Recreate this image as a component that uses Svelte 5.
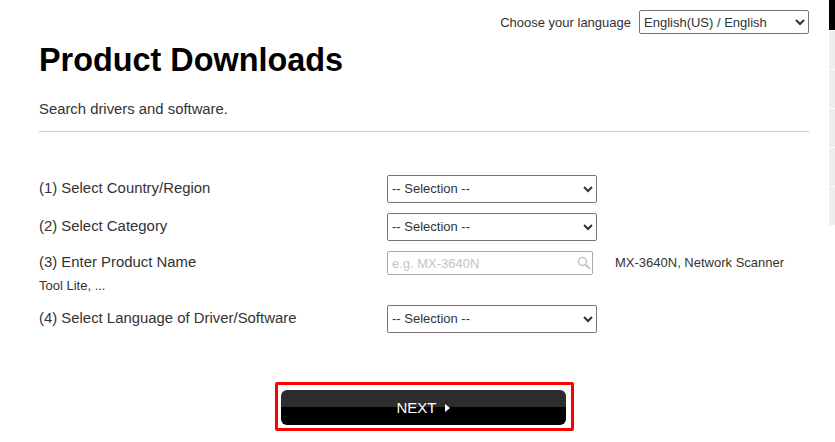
<script>
  const rows = [
    { label: '(1) Select Country/Region' },
    { label: '(2) Select Category' },
    { label: '(3) Enter Product Name', product: true },
    { label: '(4) Select Language of Driver/Software' }
  ];
</script>

<div class="page">
  <div class="lang">
    <span>Choose your language</span>
    <select class="lang-select">
      <option>English(US) / English</option>
    </select>
  </div>

  <h1>Product Downloads</h1>
  <p class="lead">Search drivers and software.</p>

  <div class="form">
    {#each rows as row}
      <div class="row" class:product={row.product}>
        <label for={row.label}>{row.label}</label>
        {#if row.product}
          <span class="search">
            <input id={row.label} type="text" placeholder="e.g. MX-3640N" />
            <svg width="14" height="14" viewBox="0 0 14 14" fill="none" stroke="#c4c4c4">
              <circle cx="5.5" cy="5.5" r="4" stroke-width="1.5" />
              <path d="M8.5 8.5l4.5 4.5" stroke-width="2" />
            </svg>
          </span>
          <span class="hint">MX-3640N, Network Scanner Tool Lite, ...</span>
        {:else}
          <select id={row.label}>
            <option>-- Selection --</option>
          </select>
        {/if}
      </div>
    {/each}
  </div>

  <div class="actions">
    <button type="button">NEXT<span class="arrow"></span></button>
  </div>
</div>

<div class="rail">
  <span class="dark"></span>
  <span></span>
  <span></span>
  <span></span>
  <span></span>
  <span></span>
</div>

<style>
  :global(body) {
    margin: 0;
    background: #fff;
    overflow: hidden;
  }

  .page {
    width: 770px;
    height: 442px;
    padding-left: 39px;
    font-family: "Liberation Sans", Arial, sans-serif;
    color: #333;
    font-size: 13px;
  }

  .lang {
    display: flex;
    justify-content: flex-end;
    align-items: center;
    gap: 8px;
    padding-top: 10px;
    height: 24px;
  }

  select {
    font-family: "Liberation Sans", Arial, sans-serif;
    font-size: 13px;
    color: #333;
    background-color: #fff;
    border: 1px solid #767676;
    border-radius: 2px;
    width: 210px;
    height: 28px;
    padding: 0 0 2px;
    margin: 0;
  }

  .lang-select {
    width: 170px;
    height: 24px;
    padding: 0;
  }

  h1 {
    margin: 7px 0 0;
    font-size: 32.4px;
    line-height: 38px;
    color: #000;
    font-weight: bold;
  }

  .lead {
    margin: 21px 0 0;
    font-size: 14.85px;
    line-height: 18px;
    padding-bottom: 13px;
    border-bottom: 1px solid #ccc;
  }

  .form {
    margin-top: 43px;
  }

  .row {
    font-size: 14.9px;
    min-height: 28px;
    margin-bottom: 10px;
  }

  .row label {
    float: left;
    width: 348px;
    line-height: 26px;
  }

  .row select {
    display: block;
  }

  .row.product {
    font-size: 13px;
    line-height: 23px;
    margin-bottom: 0;
    min-height: 54px;
  }

  .row.product label {
    font-size: 14.9px;
    line-height: 22px;
  }

  .search {
    position: relative;
    float: left;
    width: 206px;
    height: 24px;
    margin-right: 22px;
    margin-bottom: -2px;
  }

  input {
    box-sizing: border-box;
    display: block;
    width: 206px;
    height: 24px;
    margin: 0;
    padding: 0 22px 0 4px;
    border: 1px solid #aaa;
    border-radius: 2px;
    font-family: "Liberation Sans", Arial, sans-serif;
    font-size: 13px;
  }

  input::placeholder {
    color: #c4c4c4;
  }

  .search svg {
    position: absolute;
    right: 2px;
    top: 5px;
  }

  .actions {
    display: flex;
    justify-content: center;
    margin-top: 49px;
  }

  button {
    width: 299px;
    height: 49px;
    box-sizing: border-box;
    border: 3px solid #f00;
    border-radius: 2px;
    padding: 5px 5px 3px 3px;
    background: #fff;
    cursor: pointer;
    font-family: "Liberation Sans", Arial, sans-serif;
    font-size: 15px;
    color: #fff;
    position: relative;
    z-index: 0;
  }

  button::before {
    content: "";
    position: absolute;
    inset: 5px 5px 3px 3px;
    z-index: -1;
    border-radius: 6px;
    background: linear-gradient(#2d2d2d 50%, #000 50%);
  }

  .arrow {
    display: inline-block;
    margin-left: 8px;
    vertical-align: 1px;
    border-left: 5px solid #fff;
    border-top: 4px solid transparent;
    border-bottom: 4px solid transparent;
  }

  .rail {
    position: absolute;
    top: 0;
    left: 829px;
    width: 6px;
    display: flex;
    flex-direction: column;
    gap: 1px;
  }

  .rail span {
    height: 38px;
    background: #eee;
  }

  .rail .dark {
    height: 30px;
    background: #000;
  }
</style>
